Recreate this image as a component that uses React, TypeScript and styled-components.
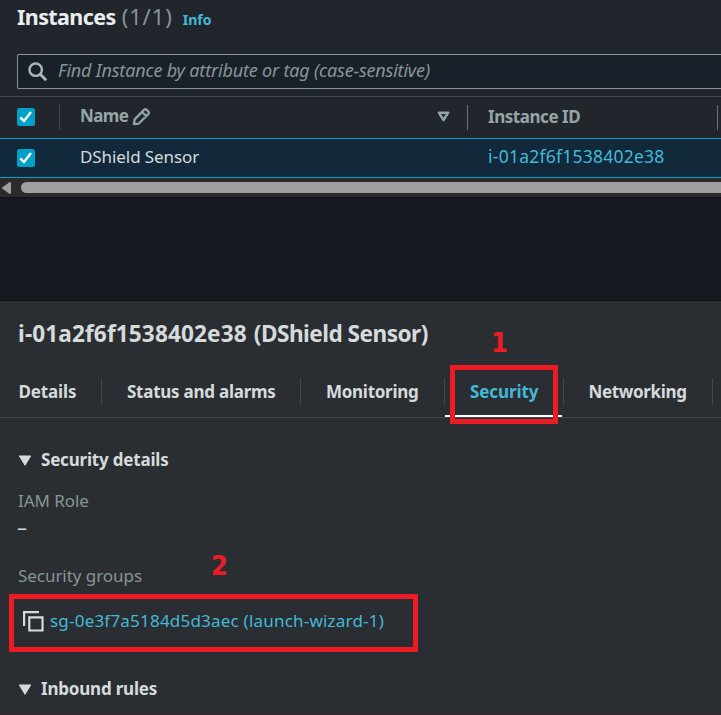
import React from 'react';
import styled, { createGlobalStyle } from 'styled-components';

const GlobalStyle = createGlobalStyle`
  * { box-sizing: border-box; }
  body {
    margin: 0;
    overflow: hidden;
    background: #161920;
    font-family: "Noto Sans", "Open Sans", sans-serif;
    font-size: 17px;
    color: #d5dbdb;
  }
`;

const Page = styled.main`
  width: 721px;
  height: 715px;
  display: flex;
  flex-direction: column;
  overflow: hidden;
  white-space: nowrap;
`;

const Text = styled.span<{ $track?: number }>`
  letter-spacing: ${(p) => p.$track ?? 0}px;
`;

const TableHeader = styled.header`
  height: 96px;
  flex: none;
  display: flex;
  flex-direction: column;
  padding-left: 17px;
  background: #21252c;
`;

const TitleRow = styled.div`
  height: 54px;
  display: flex;
  align-items: baseline;
`;

const Title = styled.h1`
  margin: 0;
  font-size: 21.5px;
  line-height: 33px;
  font-weight: 700;
  letter-spacing: -0.6px;
  color: #eaeded;
`;

const Counter = styled.span`
  margin-left: 6px;
  font-size: 22px;
  line-height: 33px;
  letter-spacing: 0.9px;
  color: #879596;
`;

const InfoLink = styled.a`
  margin-left: 10px;
  font-size: 14px;
  font-weight: 700;
  color: #44b9d6;
`;

const SearchBox = styled.div`
  height: 35px;
  display: flex;
  align-items: center;
  gap: 10px;
  padding-left: 10px;
  border: 1px solid #879596;
  border-right: 0;
  border-radius: 2px 0 0 2px;
  background: #1a2029;
`;

const Placeholder = styled.span`
  padding-bottom: 2px;
  font-size: 18px;
  font-style: italic;
  line-height: 31px;
  letter-spacing: -0.18px;
  color: #879596;
`;

const TableRow = styled.div<{ $selected?: boolean }>`
  flex: none;
  display: grid;
  grid-template-columns: 60px 408px 250px 1fr;
  height: ${(p) => (p.$selected ? 40 : 42)}px;
  border-top: 1px solid ${(p) => (p.$selected ? '#00a1c9' : '#414750')};
  border-bottom: ${(p) => (p.$selected ? '1px solid #00a1c9' : '0')};
  background: ${(p) => (p.$selected ? '#12293b' : '#21252c')};
`;

const Cell = styled.div<{ $head?: boolean; $rule?: string }>`
  display: flex;
  align-items: center;
  padding: 0 18px ${(p) => (p.$head ? 2 : 3)}px 20px;
  font-weight: ${(p) => (p.$head ? 700 : 400)};
  color: ${(p) => (p.$head ? '#95a5a6' : '#d5dbdb')};
  background: ${(p) =>
    p.$rule ? `linear-gradient(${p.$rule}, ${p.$rule}) right 8px / 1px 25px no-repeat` : 'none'};
`;

const CheckCell = styled(Cell)`
  padding: 0 0 ${(p) => (p.$head ? 1 : 0)}px 17px;
`;

const ColumnName = styled.span`
  padding-bottom: 3px;
  letter-spacing: -0.6px;
`;

const SortIcon = styled.svg`
  margin-left: auto;
`;

const EditIcon = styled.svg`
  margin-left: 4px;
`;

const Link = styled.a`
  padding-bottom: 1px;
  font-size: 17.5px;
  letter-spacing: 0.24px;
  color: #44b9d6;
`;

const ScrollBar = styled.div`
  flex: none;
  height: 19px;
  display: flex;
  align-items: center;
  gap: 10px;
  padding-left: 1px;
  background: #2b2b2b;
`;

const Thumb = styled.div`
  flex: 1;
  height: 11px;
  border-radius: 6px 0 0 6px;
  background: #9f9f9f;
`;

const Divider = styled.div`
  flex: none;
  height: 104px;
  border-top: 1px solid #0e1014;
  border-bottom: 1px solid #101216;
  background: #161920;
`;

const DetailPanel = styled.section`
  position: relative;
  flex: 1;
  border-bottom: 1px solid #30242c;
  background: #2a2e33;
`;

const PanelTitle = styled.h2`
  margin: 0;
  height: 66px;
  display: flex;
  gap: 7px;
  padding-left: 18px;
  font-size: 22.6px;
  line-height: 66px;
  font-weight: 700;
`;

const Tabs = styled.nav`
  height: 51px;
  display: flex;
  border-bottom: 1px solid #414750;
`;

const Tab = styled.div<{ $width: number; $inset: number; $active?: boolean; $track?: number }>`
  width: ${(p) => p.$width}px;
  flex: none;
  height: 50px;
  padding-left: ${(p) => p.$inset}px;
  background:
    linear-gradient(#414750, #414750) right 11px / 1px 27px no-repeat,
    linear-gradient(#fff, #fff) 0 100% / ${(p) => (p.$active ? 117 : 0)}px 2px no-repeat;
  line-height: 49px;
  font-weight: 700;
  letter-spacing: ${(p) => p.$track ?? 0}px;
  color: ${(p) => (p.$active ? '#44b9d6' : '#d5dbdb')};
`;

const Body = styled.div`
  padding: 30px 0 0 18px;
  display: flex;
  flex-direction: column;
`;

const SectionTitle = styled.h3`
  margin: 0;
  height: 24px;
  display: flex;
  align-items: center;
  gap: 9px;
  font-size: 17px;
  line-height: 24px;
  font-weight: 700;
  letter-spacing: -0.2px;
`;

const Field = styled.dl`
  margin: 17px 0 0;
  line-height: 24px;
`;

const Label = styled.dt`
  color: #879596;
  letter-spacing: -0.05px;
`;

const Value = styled.dd`
  margin: 3px 0 0 -1px;
  height: 24px;
  font-size: 20px;
`;

const GroupField = styled(Field)`
  margin: 24px 0 56px;
  height: 57px;
`;

const GroupValue = styled.dd`
  margin: 21px 0 0 5px;
  display: flex;
  align-items: center;
  gap: 6px;
  color: #44b9d6;
`;

const Callout = styled.div<{ $x: number; $y: number; $w: number; $h: number }>`
  position: absolute;
  left: ${(p) => p.$x}px;
  top: ${(p) => p.$y}px;
  width: ${(p) => p.$w}px;
  height: ${(p) => p.$h}px;
  border: 5px solid #ed1c24;
`;

const CalloutNumber = styled.span<{ $x: number; $y: number }>`
  position: absolute;
  left: ${(p) => p.$x}px;
  top: ${(p) => p.$y}px;
  font: 700 27px/30px "DejaVu Sans Condensed", "DejaVu Sans", sans-serif;
  font-stretch: condensed;
  color: #ed1c24;
`;

const Checkbox = () => (
  <svg width="18" height="18" viewBox="0 0 18 18">
    <rect width="18" height="18" rx="2.5" fill="#00a1c9" />
    <path d="M3.3 9.3 7 13l7-9" fill="none" stroke="#fff" strokeWidth="2.4" />
  </svg>
);

const Caret = () => (
  <svg width="14" height="11" viewBox="0 0 14 11">
    <path d="M1.5 1h11L7 10Z" fill="#d5dbdb" stroke="#d5dbdb" strokeWidth="1.2" strokeLinejoin="round" />
  </svg>
);

const tabs = [
  { label: 'Details', width: 102, inset: 18.5, track: -0.15 },
  { label: 'Status and alarms', width: 199, inset: 25, track: -0.25 },
  { label: 'Monitoring', width: 144, inset: 25, track: -0.28 },
  { label: 'Security', width: 119, inset: 25, track: -0.1, active: true },
  { label: 'Networking', width: 149, inset: 24.5, track: -0.35 },
];

export default function App() {
  return (
    <>
      <GlobalStyle />
      <Page>
        <TableHeader>
          <TitleRow>
            <Title>Instances</Title>
            <Counter>(1/1)</Counter>
            <InfoLink>Info</InfoLink>
          </TitleRow>
          <SearchBox>
            <svg width="20" height="20" viewBox="0 0 20 20" fill="none" stroke="#aab7b8" strokeWidth="2.4">
              <circle cx="7.7" cy="7.7" r="6.2" />
              <path d="m12.2 12.2 6 6" strokeWidth="2.8" />
            </svg>
            <Placeholder>Find Instance by attribute or tag (case-sensitive)</Placeholder>
          </SearchBox>
        </TableHeader>
        <TableRow>
          <CheckCell $head $rule="#414750"><Checkbox /></CheckCell>
          <Cell $head $rule="#687078">
            <ColumnName>Name</ColumnName>
            <EditIcon width="19" height="19" viewBox="0 0 20 20" fill="none" stroke="#95a5a6" strokeWidth="2.4" strokeLinejoin="round">
              <path d="m2 18 .8-5L12.9 2.8a1.6 1.6 0 0 1 2.3 0l2.2 2.2a1.6 1.6 0 0 1 0 2.3L7.2 17.4ZM10.6 5.3l4.3 4.3" />
            </EditIcon>
            <SortIcon width="13" height="11" viewBox="0 0 13 11" fill="none" stroke="#95a5a6" strokeWidth="2.4" strokeLinejoin="round">
              <path d="M1.8 1.7h9.4L6.5 9Z" />
            </SortIcon>
          </Cell>
          <Cell $head $rule="#687078"><Text $track={-0.45}>Instance ID</Text></Cell>
        </TableRow>
        <TableRow $selected>
          <CheckCell><Checkbox /></CheckCell>
          <Cell><Text $track={-0.08}>DShield Sensor</Text></Cell>
          <Cell><Link>i-01a2f6f1538402e38</Link></Cell>
        </TableRow>
        <ScrollBar>
          <svg width="10" height="14" viewBox="0 0 10 14">
            <path d="M9 2v10L2 7Z" fill="#9f9f9f" stroke="#9f9f9f" strokeWidth="2" strokeLinejoin="round" />
          </svg>
          <Thumb />
        </ScrollBar>
        <Divider />
        <DetailPanel>
          <PanelTitle>
            <Text $track={0.12}>i-01a2f6f1538402e38</Text>
            <Text $track={-0.52}>(DShield Sensor)</Text>
          </PanelTitle>
          <Tabs>
            {tabs.map((t) => (
              <Tab key={t.label} $width={t.width} $inset={t.inset} $track={t.track} $active={t.active}>
                {t.label}
              </Tab>
            ))}
          </Tabs>
          <Body>
            <SectionTitle><Caret />Security details</SectionTitle>
            <Field>
              <Label>IAM Role</Label>
              <Value>–</Value>
            </Field>
            <GroupField>
              <Label>Security groups</Label>
              <GroupValue>
                <svg width="21" height="21" viewBox="0 0 21 21" fill="none" stroke="#d5dbdb" strokeWidth="2.2">
                  <path d="M1.1 15V1.1H16" />
                  <path d="M6.3 6.3h13.2v13.2H6.3Z" />
                </svg>
                <Text $track={0.21}>sg-0e3f7a5184d5d3aec (launch-wizard-1)</Text>
              </GroupValue>
            </GroupField>
            <SectionTitle><Caret />Inbound rules</SectionTitle>
          </Body>
          <CalloutNumber $x={491} $y={27}>1</CalloutNumber>
          <CalloutNumber $x={211} $y={250}>2</CalloutNumber>
          <Callout $x={450} $y={64} $w={108} $h={59} />
          <Callout $x={9} $y={293} $w={409} $h={58} />
        </DetailPanel>
      </Page>
    </>
  );
}
